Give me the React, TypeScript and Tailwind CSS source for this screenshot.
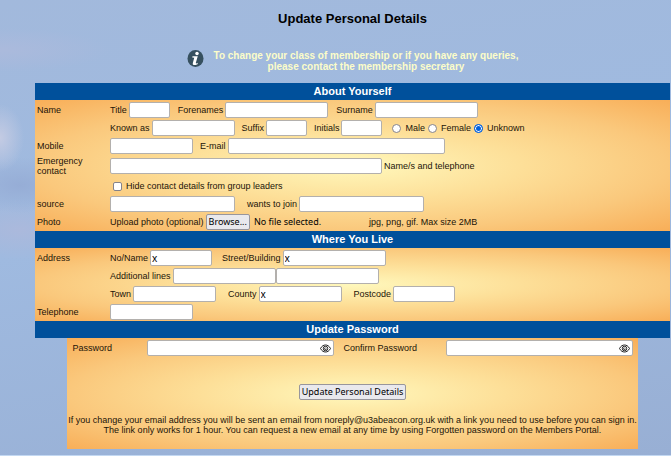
import { useRef } from "react";
import type { InputHTMLAttributes, ReactNode } from "react";
import clsx from "clsx";

interface FieldProps extends InputHTMLAttributes<HTMLInputElement> {
  id: string;
  label?: string;
}

const inputStyle =
  "h-4 rounded-xs border border-[#b3b0ad] bg-white px-px font-['Noto_Sans',sans-serif] text-[10px] leading-3 text-black";

const Field = ({ id, label, className, ...props }: FieldProps) => (
  <div className="flex items-center gap-[2px]">
    {label && <label htmlFor={id}>{label}</label>}
    <input id={id} name={id} type="text" className={clsx(inputStyle, className)} {...props} />
  </div>
);

const Row = ({
  label,
  htmlFor,
  className,
  children,
}: {
  label?: string;
  htmlFor?: string;
  className?: string;
  children: ReactNode;
}) => (
  <div className="flex items-center py-px">
    <div className="w-[75px] shrink-0 pl-[2px] pr-5">
      {htmlFor ? <label htmlFor={htmlFor} className="block">{label}</label> : label}
    </div>
    <div className={clsx("flex min-h-4 items-center", className)}>{children}</div>
  </div>
);

const SectionTitle = ({ children }: { children: ReactNode }) => (
  <h2 className="bg-[#00509b] text-center text-[11px] font-bold leading-[17px] text-white">
    {children}
  </h2>
);

const Panel = ({ className, children }: { className?: string; children: ReactNode }) => (
  <div
    className={clsx(
      "bg-[radial-gradient(ellipse_farthest-corner_at_center,#fff8bc_0%,#fddf98_38%,#fac87c_70%,#f8ae58_100%)]",
      className
    )}
  >
    {children}
  </div>
);

const Radio = ({ id, label, checked }: { id: string; label: string; checked?: boolean }) => (
  <div className="flex items-center gap-1">
    <input
      id={id}
      type="radio"
      name="gender"
      defaultChecked={checked}
      className="size-[9px] appearance-none rounded-full border border-[#85838a] bg-white checked:border-[#0060df] checked:bg-[#0060df] checked:shadow-[inset_0_0_0_1px_white]"
    />
    <label htmlFor={id}>{label}</label>
  </div>
);

const PasswordField = ({
  id,
  label,
  labelWidth,
}: {
  id: string;
  label: string;
  labelWidth: string;
}) => (
  <div className="flex items-center text-left">
    <label htmlFor={id} className={labelWidth}>{label}</label>
    <div className="relative">
      <input id={id} name={id} type="password" className={clsx(inputStyle, "block w-[187px] pr-4")} />
      <button
        type="button"
        aria-label="Show password"
        className="absolute inset-y-0 right-[3px] flex items-center"
      >
        <svg width="11" height="9" viewBox="0 0 22 18" fill="none" stroke="#222" strokeWidth="2">
          <path d="M1 9C4 3.500 7.500 2 11 2s7 1.500 10 7c-3 5.500-6.500 7-10 7S4 14.500 1 9z" />
          <circle cx="11" cy="9" r="4.500" />
          <path d="M11 7.500a1.800 1.800 0 1 0 1.800 1.800" />
        </svg>
      </button>
    </div>
  </div>
);

const buttonStyle =
  "h-4 rounded-xs border border-[#98969c] bg-[#e9e9ed] px-[2px] font-['Noto_Sans',sans-serif] text-[9px] leading-3 text-black";

const App = () => {
  const fileInput = useRef<HTMLInputElement>(null);

  return (
    <div className="min-h-screen border-b border-[#c3d8f2] bg-[radial-gradient(ellipse_110px_22px_at_0px_50px,#abbadc_0%,transparent_100%),radial-gradient(ellipse_24px_34px_at_0px_138px,#c4cbe3_0%,transparent_100%),radial-gradient(ellipse_60px_28px_at_20px_185px,#96add6_0%,transparent_100%),radial-gradient(ellipse_70px_30px_at_20px_230px,#abb9dc_0%,transparent_100%),linear-gradient(170deg,#a2b9dc_0%,#9fbae0_45%,#98afd4_100%)] pb-[5px] pl-[35px] pr-px font-['Liberation_Sans',Arial,sans-serif] text-[9px] leading-[10px] text-[#1c1408]">
      <h1 className="pt-[11px] text-center text-[13px] font-bold leading-4 text-black">
        Update Personal Details
      </h1>

      <div className="flex items-start justify-center gap-[10px] pb-[11px] pt-[23px]">
        <svg width="17" height="18" viewBox="0 0 34 36" aria-hidden="true">
          <ellipse cx="17" cy="17" rx="16" ry="17" fill="#36505f" />
          <circle cx="20" cy="7" r="3.500" fill="#fff" />
          <path
            d="M11 12.500h10.500l-3.800 13q-.5 2.500 4 .2l-.7 2.600q-10.500 4.500-9.500-1.800l3-11-4-.5z"
            fill="#fff"
          />
        </svg>
        <p className="text-center text-[10px] font-bold leading-[11px] text-[#fcfdc9]">
          To change your class of membership or if you have any queries,
          <br />
          please contact the membership secretary
        </p>
      </div>

      <form onSubmit={(e) => e.preventDefault()}>
        <SectionTitle>About Yourself</SectionTitle>
        <Panel className="pt-px">
          <Row label="Name" className="gap-2">
            <Field id="title" label="Title" className="w-[41px]" />
            <Field id="forenames" label="Forenames" className="w-[103px]" />
            <Field id="surname" label="Surname" className="w-[103px]" />
          </Row>
          <Row className="gap-[7px]">
            <Field id="knownAs" label="Known as" className="w-[83px]" />
            <Field id="suffix" label="Suffix" className="w-[41px]" />
            <Field id="initials" label="Initials" className="w-[41px]" />
            <div className="flex gap-[3px] pl-[3px]">
              <Radio id="male" label="Male" />
              <Radio id="female" label="Female" />
              <Radio id="unknown" label="Unknown" checked />
            </div>
          </Row>
          <Row label="Mobile" htmlFor="mobile" className="gap-[7px]">
            <Field id="mobile" className="w-[83px]" />
            <Field id="email" label="E-mail" className="w-[217px]" />
          </Row>
          <Row label="Emergency contact" htmlFor="emergency" className="gap-[2px]">
            <Field id="emergency" className="w-[272px]" />
            <span>Name/s and telephone</span>
          </Row>
          <Row className="gap-1 pl-[3px]">
            <input
              id="hideContact"
              type="checkbox"
              className="size-[9px] appearance-none rounded-xs border border-[#85838a] bg-white checked:bg-[#0060df]"
            />
            <label htmlFor="hideContact">Hide contact details from group leaders</label>
          </Row>
          <Row label="source" htmlFor="source" className="gap-3">
            <Field id="source" className="w-[125px]" />
            <Field id="wantsToJoin" label="wants to join" className="w-[125px]" />
          </Row>
          <Row label="Photo" className="gap-[2px]">
            <label htmlFor="photo">Upload photo (optional)</label>
            <input ref={fileInput} id="photo" type="file" className="hidden" />
            <button type="button" onClick={() => fileInput.current?.click()} className={buttonStyle}>
              Browse...
            </button>
            <span className="pl-[2px] font-['Noto_Sans',sans-serif] text-[9px] text-black">
              No file selected.
            </span>
            <span className="pl-[46px]">jpg, png, gif. Max size 2MB</span>
          </Row>
        </Panel>

        <SectionTitle>Where You Live</SectionTitle>
        <Panel className="pt-px">
          <Row label="Address" className="gap-[10px]">
            <Field id="houseName" label="No/Name" defaultValue="x" className="w-[62px]" />
            <Field id="street" label="Street/Building" defaultValue="x" className="w-[103px]" />
          </Row>
          <Row>
            <Field id="line1" label="Additional lines" className="w-[103px]" />
            <Field id="line2" aria-label="Additional line 2" className="w-[103px]" />
          </Row>
          <Row className="gap-3">
            <Field id="town" label="Town" className="w-[83px]" />
            <Field id="county" label="County" defaultValue="x" className="w-[83px]" />
            <Field id="postcode" label="Postcode" className="w-[62px]" />
          </Row>
          <Row label="Telephone" htmlFor="telephone">
            <Field id="telephone" className="w-[83px]" />
          </Row>
        </Panel>

        <SectionTitle>Update Password</SectionTitle>
        <Panel className="mx-8 pb-[14px] pt-[2px] text-center">
          <div className="flex justify-center gap-[10px]">
            <PasswordField id="password" label="Password" labelWidth="w-[74px]" />
            <PasswordField id="confirmPassword" label="Confirm Password" labelWidth="w-[102px]" />
          </div>
          <button type="submit" className={clsx(buttonStyle, "mb-[15px] mt-7")}>
            Update Personal Details
          </button>
          <p>
            If you change your email address you will be sent an email from
            noreply@u3abeacon.org.uk with a link you need to use before you can sign in.
          </p>
          <p>
            The link only works for 1 hour. You can request a new email at any time by using
            Forgotten password on the Members Portal.
          </p>
        </Panel>
      </form>
    </div>
  );
};

export default App;
